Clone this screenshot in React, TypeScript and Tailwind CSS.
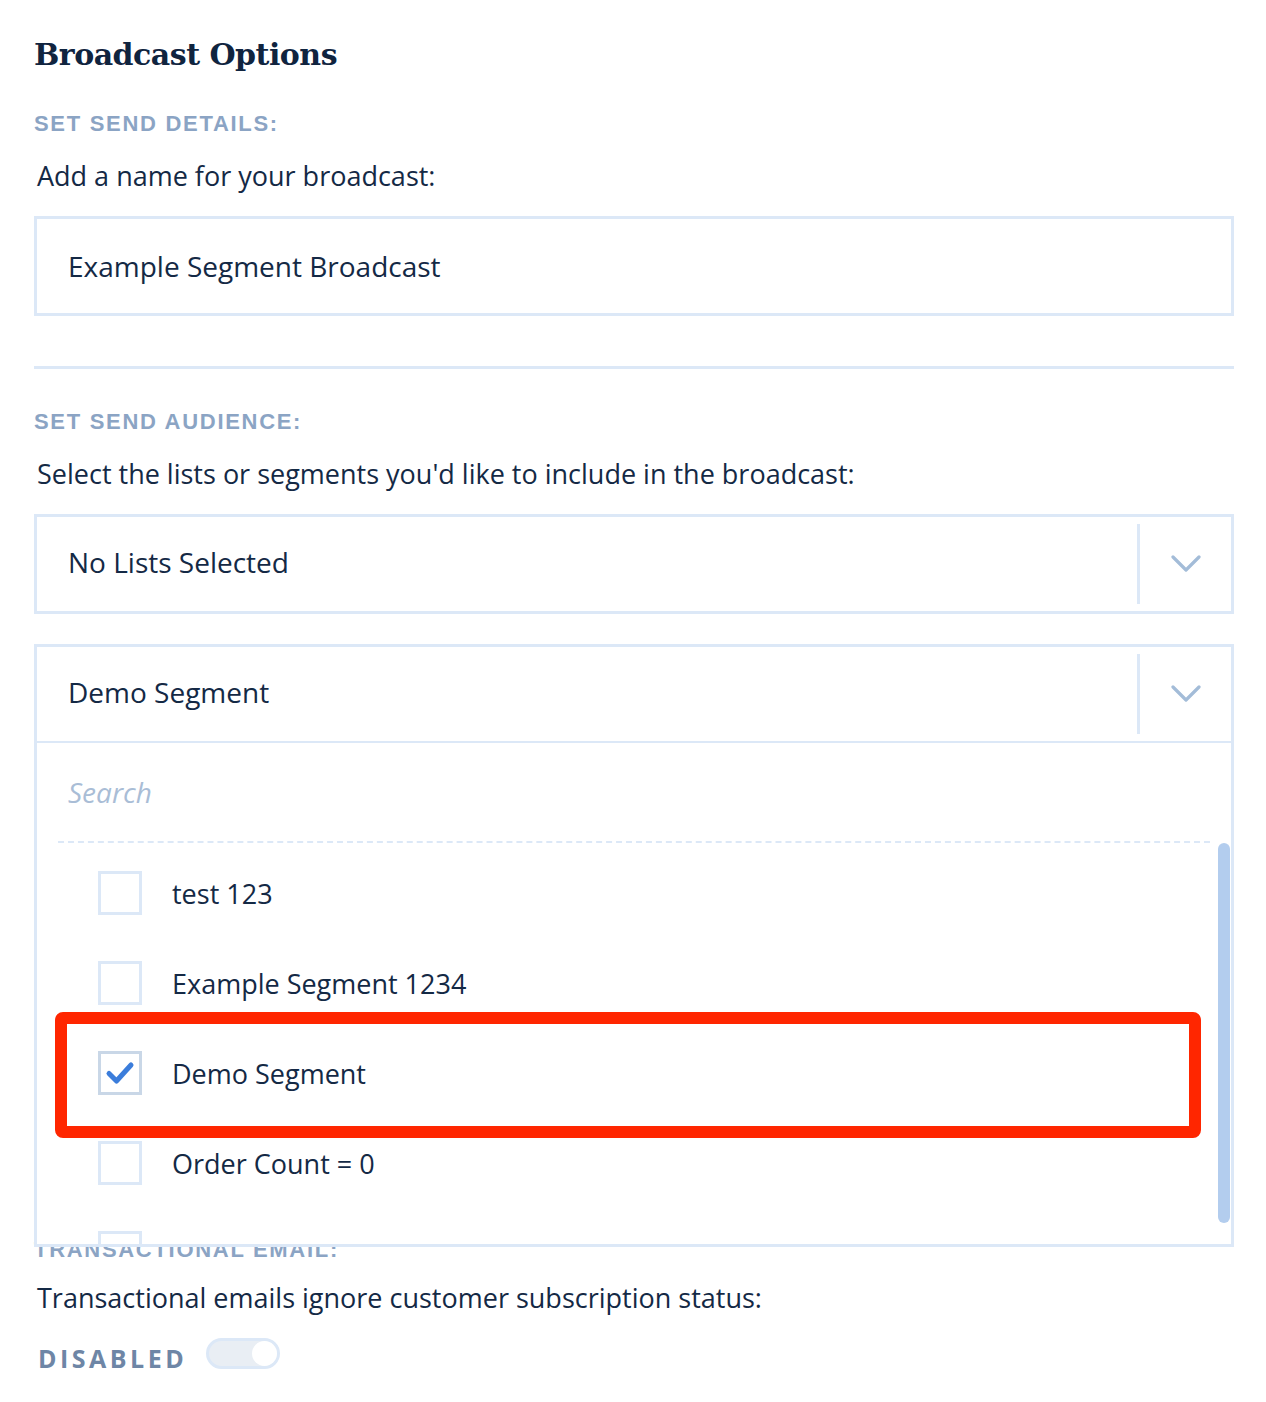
import React from "react";

function Chevron() {
  return (
    <svg width="30" height="18" viewBox="0 0 30 18" fill="none">
      <path d="M2 2 L15 15 L28 2" stroke="#a3bcd8" strokeWidth="3.2" strokeLinecap="round" strokeLinejoin="round" />
    </svg>
  );
}

function SelectBox({ label }: { label: string }) {
  return (
    <div className="flex h-[100px] items-stretch border-[3px] border-[#dce8f7] bg-white">
      <div className="flex flex-1 items-center pb-[4px] pl-[31px] text-[28px]">{label}</div>
      <div className="my-[7px] w-[3px] bg-[#dce8f7]" />
      <div className="flex w-[91px] items-center justify-center">
        <Chevron />
      </div>
    </div>
  );
}

function Item({ label, checked }: { label: string; checked?: boolean }) {
  return (
    <div className="flex h-[90px] shrink-0 items-center pl-[61px]">
      <div
        className={
          checked
            ? "flex h-[44px] w-[44px] items-center justify-center border-[3px] border-[#c9d7e7] bg-white"
            : "h-[44px] w-[44px] border-[3px] border-[#dce8f7] bg-white"
        }
      >
        {checked && (
          <svg width="30" height="26" viewBox="0 0 30 26" fill="none">
            <path d="M4 13.5 L11.5 21 L26 5" stroke="#3b7ddb" strokeWidth="5" strokeLinecap="round" strokeLinejoin="round" />
          </svg>
        )}
      </div>
      <div className="ml-[30px] pt-[2px] text-[27px]">{label}</div>
    </div>
  );
}

const labelCls =
  "font-['Liberation_Sans',Arial,sans-serif] text-[22px] font-bold leading-[24px] tracking-[1.7px] text-[#8ba4c4]";

export default function App() {
  return (
    <div className="min-h-[1402px] bg-white font-['Open_Sans',sans-serif] text-[#142945]">
      <div className="ml-[34px] w-[1200px] pt-[35px]">
        <h1 className="font-['DejaVu_Serif',serif] text-[30px] font-bold leading-[40px] tracking-[-0.5px] text-[#10243f]">
          Broadcast Options
        </h1>
        <div className={"mt-[37px] " + labelCls}>SET SEND DETAILS:</div>
        <p className="mt-[24px] pl-[3px] text-[27px] leading-[32px]">Add a name for your broadcast:</p>
        <div className="mt-[24px] flex h-[100px] items-center border-[3px] border-[#dce8f7] pl-[31px] text-[28px]">
          Example Segment Broadcast
        </div>
        <div className="mt-[50px] h-[3px] bg-[#dce8f7]" />
        <div className={"mt-[41px] " + labelCls}>SET SEND AUDIENCE:</div>
        <p className="mt-[24px] pl-[3px] text-[27px] leading-[32px]">
          Select the lists or segments you'd like to include in the broadcast:
        </p>
        <div className="mt-[24px]">
          <SelectBox label="No Lists Selected" />
        </div>
        <div className="relative z-10 mt-[30px]">
          <SelectBox label="Demo Segment" />
          <div className="absolute left-0 right-0 top-full -mt-[1px] flex h-[504px] flex-col border-x-[3px] border-b-[3px] border-[#dce8f7] bg-white">
            <div className="mx-[21px] flex h-[100px] shrink-0 items-center border-b-2 border-dashed border-[#dce8f7] pl-[10px] text-[28px] italic text-[#a9bdd6]">
              Search
            </div>
            <div className="flex flex-1 flex-col overflow-hidden pt-[5px]">
              <Item label="test 123" />
              <Item label="Example Segment 1234" />
              <Item label="Demo Segment" checked />
              <Item label="Order Count = 0" />
              <Item label="" />
            </div>
            <div className="absolute right-[1px] top-[100px] h-[380px] w-[12px] rounded-full bg-[#b3cdee]" />
            <div className="absolute left-[18px] top-[269px] h-[126px] w-[1146px] rounded-[8px] border-[12px] border-[#ff2600]" />
          </div>
        </div>
        <div className={"mt-[494px] " + labelCls}>TRANSACTIONAL EMAIL:</div>
        <p className="mt-[20px] pl-[3px] text-[27px] leading-[32px]">
          Transactional emails ignore customer subscription status:
        </p>
        <div className="mt-[24px] flex items-start pl-[4px]">
          <div className="mt-[5px] font-['Open_Sans',sans-serif] text-[25px] font-bold leading-[30px] tracking-[3.5px] text-[#6e86a6]">
            DISABLED
          </div>
          <div className="ml-[19px] flex h-[31px] w-[74px] items-center justify-end rounded-full border-[3px] border-[#dce8f7] bg-[#e9eef4]">
            <div className="h-[25px] w-[25px] rounded-full bg-white" />
          </div>
        </div>
      </div>
    </div>
  );
}
